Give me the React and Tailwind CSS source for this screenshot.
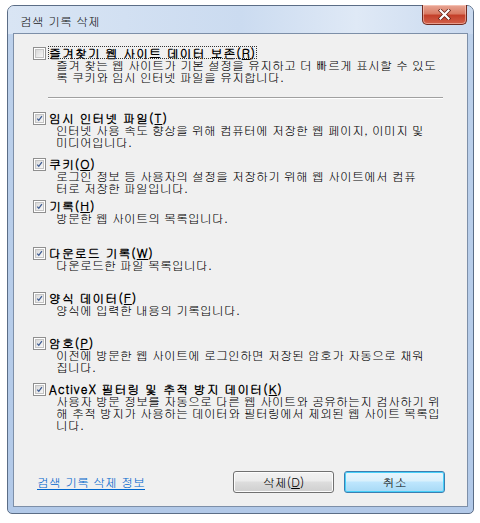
import React from "react";

function Check({ checked }) {
  return (
    <div className="w-[13px] h-[13px] shrink-0 border border-[#8f8f8f] bg-white p-[1px]">
      <div className="w-full h-full border border-[#c4c4c4] bg-[linear-gradient(135deg,#d9d9d9,#f7f7f7)] relative">
        {checked && (
          <svg viewBox="0 0 9 9" className="absolute inset-0 w-full h-full">
            <path d="M1.6 4.6 L3.6 6.9 L7.6 1.6" fill="none" stroke="#3c5a91" strokeWidth="1.6" />
          </svg>
        )}
      </div>
    </div>
  );
}

function Item({ pre, k, post, desc, h, checked = true, focus = false }) {
  return (
    <div className="flex items-start" style={h ? { height: h } : undefined}>
      <div className="mt-[1px]">
        <Check checked={checked} />
      </div>
      <div className="ml-[2px] flex flex-col">
        <div
          className={
            "self-start h-[13px] leading-[13px] font-bold text-[12px] tracking-[0.9px] whitespace-nowrap px-[1px] " +
            (focus ? "outline outline-1 outline-dotted outline-[#333] -outline-offset-1" : "")
          }
        >
          {pre}
          <span className="underline underline-offset-[1px]">{k}</span>
          {post}
        </div>
        <div className="pl-[8px]">
          {desc.map((d, i) => (
            <div key={i} className="h-[12px] leading-[12px] text-[12px] whitespace-nowrap">
              {d}
            </div>
          ))}
        </div>
      </div>
    </div>
  );
}

export default function App() {
  return (
    <div className="w-[480px] h-[523px] bg-white pt-[5px] pl-[7px] font-['Gulim','Noto_Sans_CJK_KR','Noto_Sans',sans-serif] text-black">
      <div className="relative w-[467px] h-[509px] rounded-t-[7px] rounded-b-[5px] border border-[#5b6d86] bg-[linear-gradient(180deg,#cddcf0_0%,#bdd1eb_6%,#b2c9e8_100%)] px-[5px] pb-[6px] flex flex-col">
        <div className="absolute inset-x-0 top-0 h-[28px] rounded-t-[6px] bg-[linear-gradient(90deg,#d9e5f4_0%,#cbdbf0_50%,#dfe9f6_75%,#c9d9ef_100%)]" />
        <div className="relative h-[27px] flex items-center pl-[7px] text-[12px] text-[#1b1b1b] pt-[3px]">
          검색 기록 삭제
        </div>
        <div className="absolute top-[-1px] right-[6px] w-[45px] h-[20px] rounded-b-[5px] border border-[#6e2a20] border-t-0 bg-[linear-gradient(180deg,#e9a796_0%,#d97b64_45%,#c4402a_55%,#d2604a_100%)] flex items-center justify-center shadow-[inset_0_0_0_1px_rgba(255,220,210,0.5)]">
          <svg viewBox="0 0 12 11" className="w-[13px] h-[11px]">
            <path d="M2 1.5 L10 9.5 M10 1.5 L2 9.5" stroke="#5a1a10" strokeWidth="3.6" strokeLinecap="square" />
            <path d="M2 1.5 L10 9.5 M10 1.5 L2 9.5" stroke="#ffffff" strokeWidth="2.2" strokeLinecap="square" />
          </svg>
        </div>
        <div className="relative flex-1 border border-[#7d8fa8] bg-[#f0f0f0] flex flex-col pl-[19px] pt-[12px] pr-[22px] pb-[13px]">
          <Item
            pre="즐겨찾기 웹 사이트 데이터 보존("
            k="R"
            post=")"
            checked={false}
            focus
            desc={[
              "즐겨 찾는 웹 사이트가 기본 설정을 유지하고 더 빠르게 표시할 수 있도",
              "록 쿠키와 임시 인터넷 파일을 유지합니다.",
            ]}
          />
          <div className="mt-[14px] ml-[15px] w-[395px] h-[2px] border-t border-[#a0a0a0] border-b border-b-white" />
          <div className="mt-[12px] flex flex-col">
            <Item
              pre="임시 인터넷 파일("
              k="T"
              post=")"
              h={46}
              desc={["인터넷 사용 속도 향상을 위해 컴퓨터에 저장한 웹 페이지, 이미지 및", "미디어입니다."]}
            />
            <Item
              pre="쿠키("
              k="O"
              post=")"
              h={42}
              desc={["로그인 정보 등 사용자의 설정을 저장하기 위해 웹 사이트에서 컴퓨", "터로 저장한 파일입니다."]}
            />
            <Item pre="기록(" k="H" post=")" h={47} desc={["방문한 웹 사이트의 목록입니다."]} />
            <Item pre="다운로드 기록(" k="W" post=")" h={45} desc={["다운로드한 파일 목록입니다."]} />
            <Item pre="양식 데이터(" k="F" post=")" h={45} desc={["양식에 입력한 내용의 기록입니다."]} />
            <Item
              pre="암호("
              k="P"
              post=")"
              h={46}
              desc={["이전에 방문한 웹 사이트에 로그인하면 저장된 암호가 자동으로 채워", "집니다."]}
            />
            <Item
              pre="ActiveX 필터링 및 추적 방지 데이터("
              k="K"
              post=")"
              desc={[
                "사용자 방문 정보를 자동으로 다른 웹 사이트와 공유하는지 검사하기 위",
                "해 추적 방지가 사용하는 데이터와 필터링에서 제외된 웹 사이트 목록입",
                "니다.",
              ]}
            />
          </div>
          <div className="flex-1" />
          <div className="flex items-center">
            <a className="ml-[4px] text-[12px] text-[#0066cc] underline underline-offset-[2px] whitespace-nowrap cursor-pointer">
              검색 기록 삭제 정보
            </a>
            <div className="flex-1" />
            <button className="w-[101px] h-[22px] rounded-[3px] border border-[#707070] bg-[linear-gradient(180deg,#f2f2f2_0%,#ebebeb_45%,#dddddd_50%,#cfcfcf_100%)] text-[12px] shadow-[inset_0_0_0_1px_#fcfcfc]">
              삭제(<span className="underline">D</span>)
            </button>
            <button className="ml-[10px] w-[101px] h-[22px] rounded-[3px] border border-[#3c7fb1] bg-[linear-gradient(180deg,#eaf6fd_0%,#d9f0fc_45%,#bee6fd_50%,#a7d9f5_100%)] text-[12px] shadow-[inset_0_0_0_1px_#48d0f9]">
              취소
            </button>
          </div>
        </div>
      </div>
    </div>
  );
}
